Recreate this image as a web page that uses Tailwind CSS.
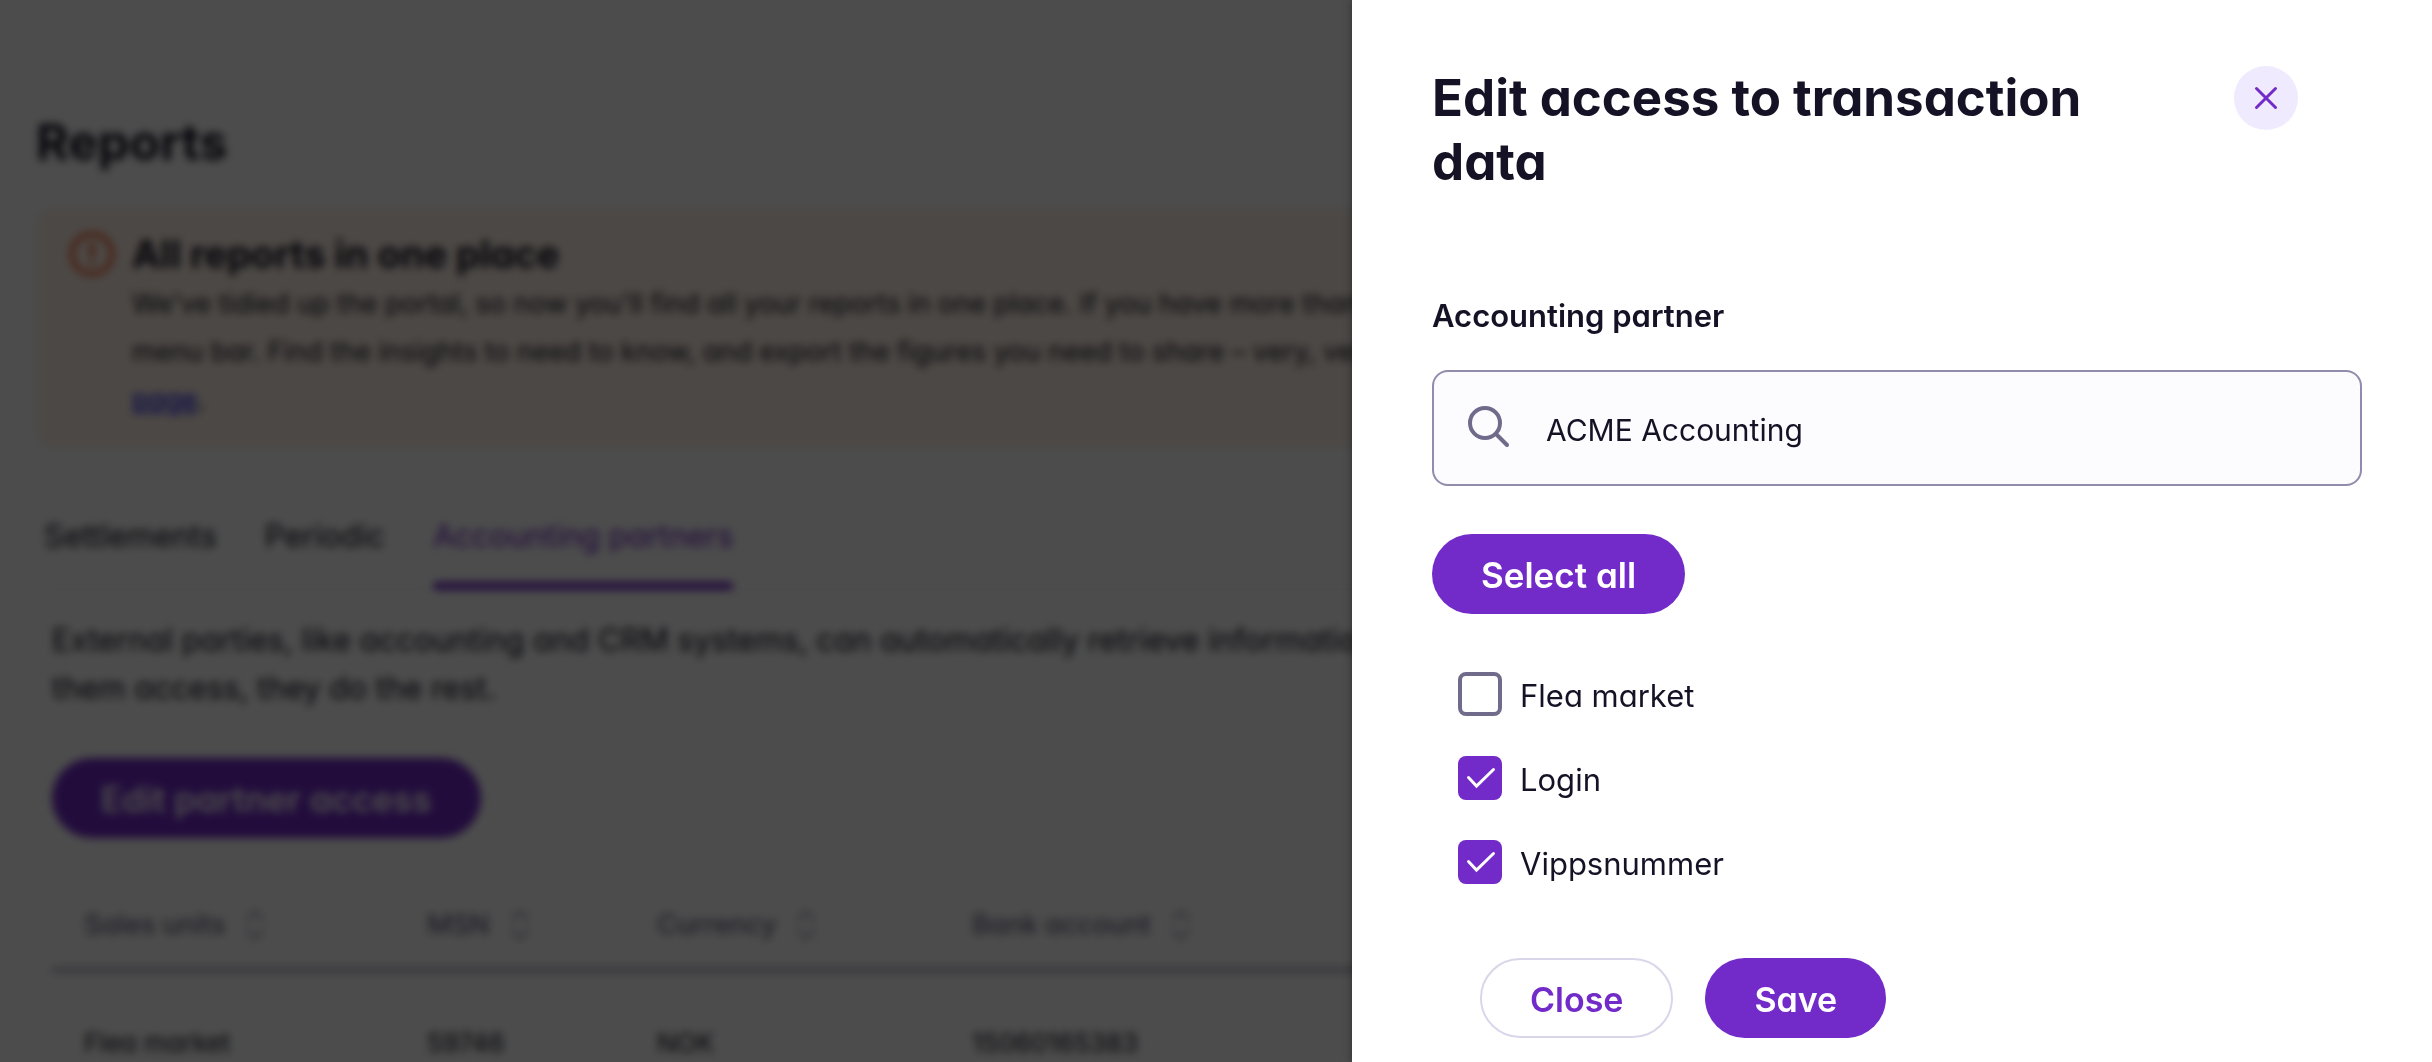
<!DOCTYPE html>
<html lang="en">
<head>
<meta charset="utf-8">
<meta name="viewport" content="width=device-width, initial-scale=1">
<title>Reports</title>
<script src="https://cdn.jsdelivr.net/npm/@tailwindcss/browser@4"></script>
</head>
<body class="h-screen overflow-hidden bg-white font-['Inter',sans-serif] text-[#161225] [font-feature-settings:'cv11']">

<main class="pt-[110px] pl-9 pr-9">
  <h1 class="text-[50px] leading-16 font-bold">Reports</h1>

  <section class="mt-[34px] flex gap-4 rounded-2xl bg-[#fff2e8] pt-[22px] pr-8 pb-[23px] pl-8">
    <svg class="h-12 w-12 shrink-0" viewBox="0 0 48 48" fill="none" stroke="#ee4a14" stroke-width="4" stroke-linecap="round" aria-hidden="true">
      <circle cx="24" cy="24" r="20"/>
      <path d="M24 14v12M24 33v1"/>
    </svg>
    <div class="whitespace-nowrap">
      <h2 class="text-[38px] leading-12 font-bold">All reports in one place</h2>
      <p class="mt-0.5 text-[27px] leading-12">We've tidied up the portal, so now you'll find all your reports in one place. If you have more than<br>menu bar. Find the insights to need to know, and export the figures you need to share – very, very<br><a href="#" class="text-[#0000ee] underline">page</a>.</p>
    </div>
  </section>

  <nav class="mt-[65px] ml-2 flex gap-12 border-b-2 border-[#f2f1f8] text-[31px] leading-12">
    <a href="#" class="pb-7">Settlements</a>
    <a href="#" class="pb-7">Periodic</a>
    <a href="#" class="relative pb-7 text-[#722ac9] after:absolute after:inset-x-0 after:-bottom-0.5 after:h-2 after:rounded-full after:bg-[#722ac9]">Accounting partners</a>
  </nav>

  <div class="pl-4">
    <p class="mt-[26px] text-[31px] leading-12 whitespace-nowrap">External parties, like accounting and CRM systems, can automatically retrieve information<br>them access, they do the rest.</p>
    <button type="button" class="mt-[46px] block h-20 rounded-full bg-[#722ac9] px-[49px] pt-0.5 text-[35px] font-semibold text-white">Edit partner access</button>

    <table class="mt-[67px] w-full table-fixed text-left">
      <colgroup><col class="w-[343px]"><col class="w-[230px]"><col class="w-[315px]"><col></colgroup>
      <thead class="text-[27px] leading-10 text-[#706b8b]">
        <tr class="border-b-4 border-[#9d99b2]">
          <th class="pb-[23px] pl-8 font-medium"><button type="button" class="flex items-center gap-5">Sales units
            <svg class="h-8 w-5 text-[#918cab]" viewBox="0 0 20 32" fill="none" stroke="currentColor" stroke-width="2" stroke-linecap="round" stroke-linejoin="round" aria-hidden="true"><path d="M2 11l8-9 8 9M2 21l8 9 8-9"/></svg></button></th>
          <th class="pb-[23px] pl-8 font-medium"><button type="button" class="flex items-center gap-5">MSN
            <svg class="h-8 w-5 text-[#918cab]" viewBox="0 0 20 32" fill="none" stroke="currentColor" stroke-width="2" stroke-linecap="round" stroke-linejoin="round" aria-hidden="true"><path d="M2 11l8-9 8 9M2 21l8 9 8-9"/></svg></button></th>
          <th class="pb-[23px] pl-8 font-medium"><button type="button" class="flex items-center gap-5">Currency
            <svg class="h-8 w-5 text-[#918cab]" viewBox="0 0 20 32" fill="none" stroke="currentColor" stroke-width="2" stroke-linecap="round" stroke-linejoin="round" aria-hidden="true"><path d="M2 11l8-9 8 9M2 21l8 9 8-9"/></svg></button></th>
          <th class="pb-[23px] pl-8 font-medium"><button type="button" class="flex items-center gap-5">Bank account
            <svg class="h-8 w-5 text-[#918cab]" viewBox="0 0 20 32" fill="none" stroke="currentColor" stroke-width="2" stroke-linecap="round" stroke-linejoin="round" aria-hidden="true"><path d="M2 11l8-9 8 9M2 21l8 9 8-9"/></svg></button></th>
        </tr>
      </thead>
      <tbody class="text-[26px] leading-10">
        <tr>
          <td class="pt-[51px] pl-8">Flea market</td>
          <td class="pt-[51px] pl-8">59746</td>
          <td class="pt-[51px] pl-8">NOK</td>
          <td class="pt-[51px] pl-8">15060165383</td>
        </tr>
      </tbody>
    </table>
  </div>
</main>

<div class="fixed inset-0 bg-black/70 backdrop-blur-xs"></div>

<aside role="dialog" aria-labelledby="drawer-title" class="fixed inset-y-0 right-0 w-[1080px] max-w-full overflow-hidden bg-white pt-[66px] pr-[70px] pl-20 shadow-[0_0_8px_rgba(0,0,0,0.4)]">
  <header class="flex items-start justify-between pr-16">
    <h2 id="drawer-title" class="max-w-[720px] text-[51px] leading-16 font-bold">Edit access to transaction data</h2>
    <button type="button" aria-label="Close panel" class="grid size-16 place-items-center rounded-full bg-[#f0eaff]">
      <svg class="size-6" viewBox="0 0 24 24" fill="none" stroke="#722ac9" stroke-width="3" stroke-linecap="round" aria-hidden="true"><path d="M2.5 2.5l19 19M21.5 2.5l-19 19"/></svg>
    </button>
  </header>

  <form>
    <label for="partner" class="mt-[102px] block text-[31px] leading-10 font-semibold">Accounting partner</label>
    <div class="mt-[34px] flex h-[116px] items-center gap-9 rounded-2xl border-2 border-[#918cab] bg-[#fcfcff] pl-8">
      <svg class="size-11 shrink-0" viewBox="0 0 44 44" fill="none" stroke="#706b8b" stroke-width="4" stroke-linecap="round" aria-hidden="true"><circle cx="19" cy="17" r="15"/><path d="M30 28l11 11"/></svg>
      <input id="partner" type="text" value="ACME Accounting" class="h-full min-w-0 flex-1 bg-transparent pt-1 text-[30px] outline-none">
    </div>

    <button type="button" class="mt-12 block h-20 rounded-full bg-[#722ac9] px-[49px] pt-0.5 text-[35px] font-semibold text-white">Select all</button>

    <div class="mt-[58px] flex flex-col items-start gap-10 pl-[26px] text-[31px] leading-10">
      <label class="flex h-11 items-center gap-[18px]">
        <input type="checkbox" class="size-11 appearance-none rounded-lg border-4 border-[#706b8b] bg-white">
        <span class="pt-1">Flea market</span>
      </label>
      <label class="flex h-11 items-center gap-[18px]">
        <span class="grid">
          <input type="checkbox" checked class="size-11 appearance-none rounded-lg bg-[#722ac9] [grid-area:1/1]">
          <svg class="size-11 [grid-area:1/1]" viewBox="0 0 44 44" fill="none" stroke="#fff" stroke-width="3" stroke-linecap="round" aria-hidden="true"><path d="M10.5 21.5l8 8.5 17-16.5"/></svg>
        </span>
        <span class="pt-1">Login</span>
      </label>
      <label class="flex h-11 items-center gap-[18px]">
        <span class="grid">
          <input type="checkbox" checked class="size-11 appearance-none rounded-lg bg-[#722ac9] [grid-area:1/1]">
          <svg class="size-11 [grid-area:1/1]" viewBox="0 0 44 44" fill="none" stroke="#fff" stroke-width="3" stroke-linecap="round" aria-hidden="true"><path d="M10.5 21.5l8 8.5 17-16.5"/></svg>
        </span>
        <span class="pt-1">Vippsnummer</span>
      </label>
    </div>

    <footer class="mt-[74px] flex gap-8 pl-12">
      <button type="button" class="h-20 rounded-full border-2 border-[#dad6ea] bg-white px-12 pt-0.5 text-[34px] font-semibold text-[#722ac9]">Close</button>
      <button type="submit" class="h-20 rounded-full bg-[#722ac9] px-[49px] pt-0.5 text-[34px] font-semibold text-white">Save</button>
    </footer>
  </form>
</aside>
</body>
</html>
